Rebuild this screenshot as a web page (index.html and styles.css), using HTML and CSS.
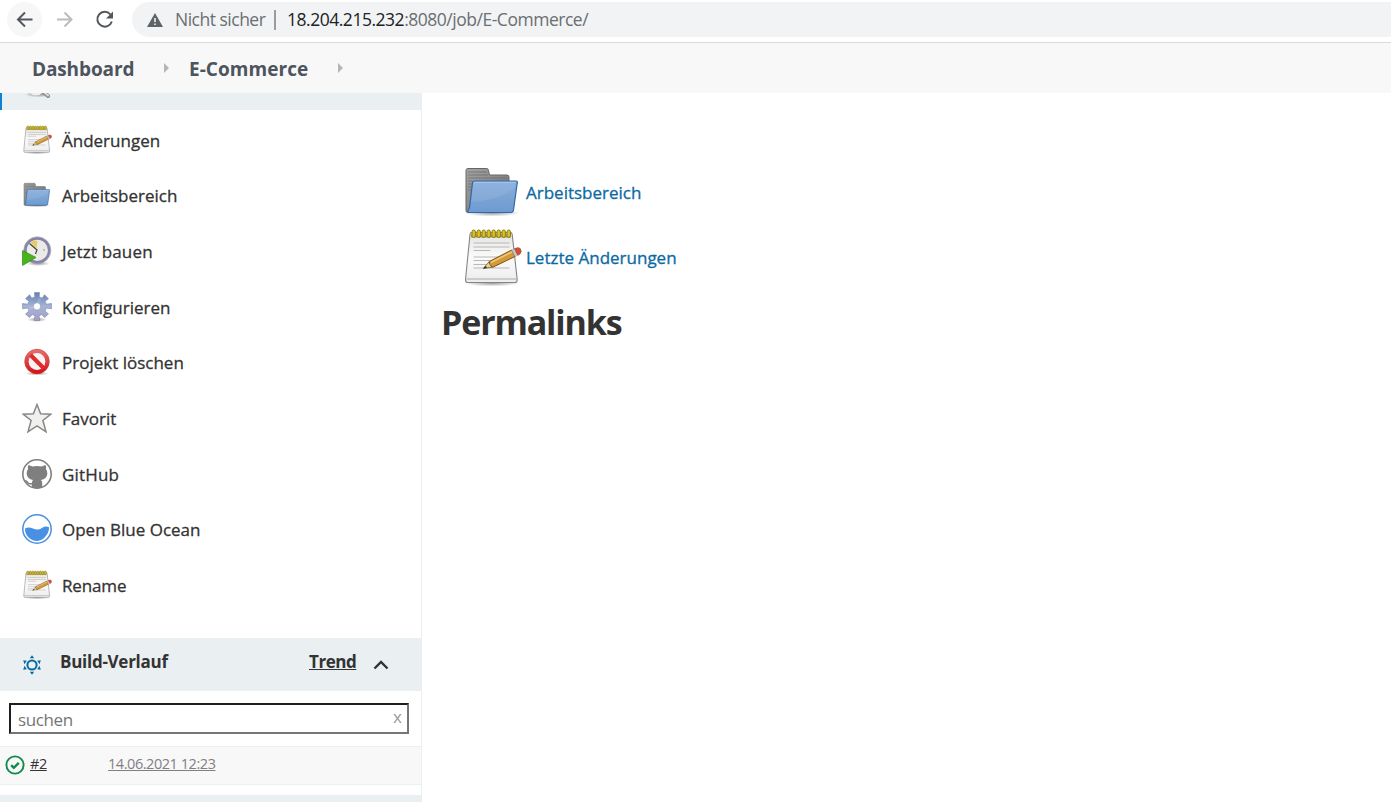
FILE: index.html
```html
<!DOCTYPE html>
<html lang="de">
<head>
<meta charset="utf-8">
<title>E-Commerce [Jenkins]</title>
<link rel="stylesheet" href="styles.css">
</head>
<body>
<svg class="defs" width="0" height="0" aria-hidden="true">
  <defs>
    <linearGradient id="paper" x1="0" y1="0" x2="0" y2="1"><stop offset="0" stop-color="#e2e2e0"/><stop offset=".5" stop-color="#fbfbfb"/><stop offset="1" stop-color="#ececec"/></linearGradient>
    <linearGradient id="blue" x1="0" y1="0" x2="0" y2="1"><stop offset="0" stop-color="#86aede"/><stop offset=".55" stop-color="#7ba3d3"/><stop offset="1" stop-color="#6c9bd2"/></linearGradient>
    <linearGradient id="grey" x1="0" y1="0" x2="1" y2="1"><stop offset="0" stop-color="#a5a5a5"/><stop offset="1" stop-color="#6c6c6c"/></linearGradient>
    <linearGradient id="gearfill" gradientUnits="userSpaceOnUse" x1="0" y1="0" x2="0" y2="29"><stop offset="0" stop-color="#5d7fb0"/><stop offset=".5" stop-color="#a8b4d3"/><stop offset="1" stop-color="#a19cc8"/></linearGradient>
    <linearGradient id="red" gradientUnits="userSpaceOnUse" x1="0" y1="2" x2="0" y2="27"><stop offset="0" stop-color="#e67474"/><stop offset="1" stop-color="#d40d12"/></linearGradient>
    <radialGradient id="shade"><stop offset="0" stop-color="#000" stop-opacity=".4"/><stop offset="1" stop-color="#000" stop-opacity="0"/></radialGradient>
    <symbol id="notepad" viewBox="0 0 60 60">
      <ellipse cx="30" cy="55" rx="28" ry="3.500" fill="url(#shade)"/>
      <path d="M9.500 4.500h39q1.500 0 1.700 2l5 45q0 3-2 3H5.500q-2 0-2-3L8 6.500q.2-2 1.500-2z" fill="url(#paper)" stroke="#858585" stroke-width="1.100"/>
      <path d="M4.500 51h50" stroke="#aaa"/>
      <path d="M11.500 15h36M11.500 19h36M11.500 22.500h17M11.500 29h36M11.500 32.500h30M11.500 36.500h24M11.500 40h36" stroke="#b8b8b8" stroke-width="1.100"/>
      <path d="M9 8h40" stroke="#a39b72" stroke-width="3"/>
      <g fill="#d9c32a" stroke="#8d7a08" stroke-width="1"><rect x="10" y="2" width="3.400" height="7.500" rx="1.700"/><rect x="15" y="2" width="3.400" height="7.500" rx="1.700"/><rect x="20" y="2" width="3.400" height="7.500" rx="1.700"/><rect x="25" y="2" width="3.400" height="7.500" rx="1.700"/><rect x="30" y="2" width="3.400" height="7.500" rx="1.700"/><rect x="35" y="2" width="3.400" height="7.500" rx="1.700"/><rect x="40" y="2" width="3.400" height="7.500" rx="1.700"/><rect x="45" y="2" width="3.400" height="7.500" rx="1.700"/></g>
      <path d="M21.300 40.500l6-7 4 5.500z" fill="#e8cf9b" stroke="#7b5a1d" stroke-width=".8"/>
      <path d="M27.300 33.500L49.700 22l3.300 6.500L31.300 39q-2.500.2-2.600-2-1.900-.5-1.400-3.500z" fill="#d29a37" stroke="#7e5115"/>
      <path d="M29 34.500L50 23.800" stroke="#efca7d" stroke-width="1.500"/>
      <path d="M49.700 22l2.800-1.300 3.300 6.500-2.800 1.300z" fill="#c9c9c9" stroke="#999" stroke-width=".5"/>
      <path d="M52.500 20.700q3.500-1.600 5.600-.3 2.200 3.200-.2 5.600l-2.100 1.200z" fill="#e0463d" stroke="#9c5a3a" stroke-width=".9"/>
      <path d="M21 40.800l2.500-3 1.600 2z" fill="#333"/>
    </symbol>
    <symbol id="folder" viewBox="0 0 60 60">
      <ellipse cx="30" cy="50" rx="28" ry="3.500" fill="url(#shade)"/>
      <path d="M4 7.500q0-2 2-2h18.500q2 0 2 2l1 4.500H45q2 0 2 2v35.500H6q-2 0-2-2z" fill="url(#grey)" stroke="#666"/>
      <path d="M6 9h19M6 12h20M6 15h39M6 18h4M6 21h4M6 24h4M6 27h4" stroke="#5f5f5f" stroke-width=".6"/>
      <path d="M12 18h42q1.500 0 1.300 1.500L51.500 47q-.4 2.500-2.500 2.500H7q-1.500 0-1-2 1.500-2 1.800-5l2.700-23q.2-1.500 1.500-1.500z" fill="url(#blue)" stroke="#3565a4" stroke-width="1.200"/>
      <path d="M12 19.300h42" stroke="#b3cdee" stroke-width=".8"/>
      <path d="M9 39q25-1 43-13l1-6H11.500z" fill="#fff" opacity=".08"/>
    </symbol>
  </defs>
</svg>

<header class="browser">
  <span class="nav-btn nav-btn-active"><svg width="20" height="20" viewBox="0 0 20 20"><path d="M17.500 9.500H3.500M10 2.500l-7 7 7 7" class="line dark"/></svg></span>
  <span class="nav-btn"><svg width="20" height="20" viewBox="0 0 20 20"><path d="M2 9.500h14M9.500 2.500l7 7-7 7" class="line pale"/></svg></span>
  <span class="nav-btn"><svg width="20" height="20" viewBox="0 0 20 20"><path d="M15.300 4.300A7.400 7.400 0 1 0 16.800 11.500" class="line dark"/><path d="M18 1.500v7h-7z" fill="#54575b"/></svg></span>
  <div class="address">
    <svg class="warn" width="16" height="14" viewBox="0 0 16 14"><path d="M8 0l8 14H0z" fill="#5f6368"/><path d="M7.200 5h1.600v4H7.200zM7.200 10.500h1.600V12H7.200z" fill="#f1f3f4"/></svg>
    <span class="insecure">Nicht sicher</span>
    <span class="sep"></span>
    <span class="url"><b>18.204.215.232</b>:8080/job/E-Commerce/</span>
  </div>
</header>

<nav class="crumbs">
  <a class="crumb crumb-dash">Dashboard</a><i class="tri"></i>
  <a class="crumb crumb-job">E-Commerce</a><i class="tri"></i>
</nav>

<div class="page">
  <aside class="side">
    <div class="current"><svg width="30" height="8" viewBox="0 0 30 8"><ellipse cx="14" cy="1.500" rx="13" ry="2.800" fill="url(#shade)"/><ellipse cx="12" cy="0" rx="5" ry="2.500" fill="#eee"/><path d="M20 0l4 3" stroke="#8c8c8c" stroke-width="4" stroke-linecap="round"/><path d="M21 0l3 2.500" stroke="#d8d8d8" stroke-width="2" stroke-linecap="round"/></svg></div>
    <ul class="tasks">
      <li><svg viewBox="0 0 60 60"><use href="#notepad"/></svg><span>Änderungen</span></li>
      <li><svg viewBox="0 -1 60 60"><use href="#folder" width="60" height="60"/></svg><span>Arbeitsbereich</span></li>
      <li><svg viewBox="0 0 30 30"><ellipse cx="16" cy="27.500" rx="12" ry="2.500" fill="url(#shade)"/><circle cx="15.300" cy="14.300" r="12" fill="#eaeae6" stroke="#8683aa" stroke-width="2.800"/><circle cx="15.300" cy="14.300" r="13.600" fill="none" stroke="#a9a9a9" stroke-width=".7"/><path d="M14.500 12.500L8.500 6.500Q12 3.500 15.500 5z" fill="#e8ca62"/><path d="M7.500 7.500l7.500 6.500-1.500 4" fill="none" stroke="#444" stroke-width="1.200"/><circle cx="22" cy="14" r=".7" fill="#777"/><path d="M.5 14.500L14 21.500.5 29.500z" fill="#47b51c" stroke="#35860f" stroke-width=".7"/></svg><span class="wider">Jetzt bauen</span></li>
      <li><svg viewBox="0 0 30 30"><ellipse cx="15" cy="27.500" rx="10" ry="2.500" fill="url(#shade)"/><path fill="url(#gearfill)" stroke="#7585b2" stroke-width=".6" fill-rule="evenodd" d="M12.500.5h5l-.3 4.500q1.800.4 3 1.200l2.300-3.500 4 4-3.500 2.500q.9 1.400 1.200 3l5.300-.7v5.200l-5.300-.7q-.3 1.600-1.200 3l3.500 3-4 3.500-2.800-3q-1.200.8-2.700 1.100l.8 4.900h-5.600l.8-4.900q-1.500-.3-2.700-1.100l-2.800 3-4-3.500 3.500-3q-.9-1.400-1.200-3l-5.300.7v-5.200l5.300.7q.3-1.600 1.200-3L3.500 6.700l4-4 2.300 3.500q1.200-.8 3-1.200zM15 10.700a3.700 3.700 0 1 0 0 7.400 3.700 3.700 0 1 0 0-7.400z"/><path d="M6 17q10-1 12-11" fill="none" stroke="#fff" stroke-width="3" opacity=".12"/></svg><span>Konfigurieren</span></li>
      <li><svg viewBox="0 0 30 30"><ellipse cx="15" cy="26.500" rx="12" ry="2" fill="url(#shade)"/><circle cx="15" cy="14.500" r="10.400" fill="#f7f3f3" stroke="url(#red)" stroke-width="4"/><path d="M8.500 8l13 13" stroke="#df2b2e" stroke-width="4"/><circle cx="15" cy="14.500" r="12.300" fill="none" stroke="#c9403f" stroke-width=".5"/></svg><span>Projekt löschen</span></li>
      <li><svg viewBox="0 0 30 30"><path d="M15 1.500l3.600 9.200 10.300.5-8 6.300 3.100 11.300L15 22.900 6 28.800l3.100-11.300-8-6.300 10.300-.5z" fill="#f0f0ef" stroke="#888" stroke-width="1.500"/></svg><span>Favorit</span></li>
      <li><svg viewBox="0 0 30 30"><circle cx="15" cy="15" r="14.200" fill="#fff" stroke="#7f7f7f" stroke-width="1.600"/><path d="M6.500 6l4 1.600q4.500-1 9 0l4-1.600q1 2 .4 4 1.600 2 1.400 5-.5 5-6.300 6 1.200 1 1.200 3v4.500q-5 2-10.400 0v-3q-4 .6-5.400-2.300-.7-1.500-2-2.200 2.500-.4 4.200 2.400 1 1 3.200.5.2-2 1.200-2.900-5.800-1-6.300-6-.2-3 1.400-5-.6-2 .4-4z" fill="#7f7f7f"/></svg><span class="wider">GitHub</span></li>
      <li><svg viewBox="0 0 30 30"><circle cx="15" cy="15" r="14.200" fill="#fff" stroke="#4a90e2" stroke-width="1.500"/><path d="M3 14.500q3.500-2 8 0 5 2.300 9-.6 3.500-2.300 7-.6 0 5-3 8.500A12 12 0 0 1 15 27 12 12 0 0 1 3 14.500z" fill="#4a90e2"/></svg><span>Open Blue Ocean</span></li>
      <li><svg viewBox="0 0 60 60"><use href="#notepad"/></svg><span class="tighter">Rename</span></li>
    </ul>

    <section class="builds">
      <div class="builds-head">
        <svg class="sun" width="20" height="20" viewBox="0 0 20 20"><circle cx="10" cy="10" r="4.600" fill="none" stroke="#0b6aa2" stroke-width="2"/><path d="M10 .3l2.200 2.900H7.800zM10 19.700l2.200-2.900H7.800zM1.200 5.200l3.600.5-2.300 3.600zM18.800 5.200l-3.600.5 2.300 3.600zM1.200 14.800l3.600-.5-2.300-3.600zM18.800 14.800l-3.600-.5 2.300-3.600z" fill="#0b6aa2"/></svg>
        <span class="builds-title">Build-Verlauf</span>
        <a class="trend">Trend</a>
        <svg class="chev" width="16" height="10" viewBox="0 0 16 10"><path d="M1.500 8.500L8 2l6.500 6.500" fill="none" stroke="#333" stroke-width="2.400"/></svg>
      </div>
      <div class="search"><span class="search-label">suchen</span><span class="search-x">x</span></div>
      <div class="build">
        <svg width="20" height="20" viewBox="0 0 20 20"><circle cx="10" cy="10" r="8.600" fill="none" stroke="#138a4b" stroke-width="1.900"/><path d="M6.200 10.200l2.600 2.600 5-5" fill="none" stroke="#138a4b" stroke-width="2.400"/></svg>
        <a class="build-no">#2</a><a class="build-date">14.06.2021 12:23</a>
      </div>
    </section>
    <div class="next"></div>
  </aside>

  <main class="main">
    <a class="link"><svg width="60" height="60" viewBox="0 0 60 60"><use href="#folder"/></svg><span>Arbeitsbereich</span></a>
    <a class="link"><svg width="60" height="60" viewBox="0 0 60 60"><use href="#notepad"/></svg><span>Letzte Änderungen</span></a>
    <h2 class="perma">Permalinks</h2>
  </main>
</div>
</body>
</html>
```

FILE: styles.css
```css
* { box-sizing: border-box; }
body { margin: 0; height: 802px; overflow: hidden; background: #fff; color: #333; font-family: "Open Sans", "Noto Sans", sans-serif; font-size: 17px; }
svg { display: block; flex: none; }
span, a { white-space: nowrap; }
.defs { position: absolute; }

.browser { display: flex; height: 43px; padding: 2px 0 5px 7px; border-bottom: 1px solid #dadada; }
.nav-btn { display: flex; align-items: center; justify-content: center; width: 35px; height: 35px; margin-right: 5px; border-radius: 50%; }
.nav-btn-active { background: #f7f7f7; }
.line { fill: none; stroke-width: 2; }
.dark { stroke: #54575b; }
.pale { stroke: #babcbe; }
.address { display: flex; flex: 1; align-items: center; margin-left: 5px; padding-left: 15px; border-radius: 18px 0 0 18px; background: #f1f3f4; color: #6b6e72; font-size: 17.500px; line-height: 35px; }
.insecure { width: 99px; margin-left: 12px; letter-spacing: -.5px; }
.sep { width: 2px; height: 20px; margin-right: 11px; background: #9a9da0; }
.url b { color: #202124; font-weight: 400; }
.url { letter-spacing: -.48px; }

.crumbs { display: flex; align-items: center; height: 50px; padding-left: 32px; background: #f8f8f8; color: #4d545d; font-size: 19px; font-weight: 700; }
.crumb { padding-top: 2px; line-height: 50px; }
.crumb-dash { width: 132px; letter-spacing: -.12px; }
.crumb-job { width: 149px; letter-spacing: .05px; }
.tri { border: 5px solid transparent; border-left-color: #b5b5b5; border-right: 0; margin-right: 20px; }

.page { display: flex; height: 709px; }
.side { width: 422px; border-right: 1px solid #eaeff2; }
.current { height: 17px; padding-left: 22px; border-left: 2px solid #0b83d0; background: #eaeff2; overflow: hidden; }
.tasks { height: 528px; margin: 0; padding: 2px 0 0 22px; list-style: none; }
.tasks li { display: flex; align-items: center; height: 55.65px; }
.tasks svg { width: 30px; height: 30px; margin-right: 10px; }
.tasks span { padding-top: 1px; -webkit-text-stroke: .3px #333; }
.tasks .wider { letter-spacing: .17px; }
.tasks .tighter { letter-spacing: -.15px; }

.builds-head { display: flex; align-items: center; height: 53px; padding-left: 22px; background: #eaeff2; font-weight: 700; line-height: 48px; }
.builds-title { width: 249px; margin-left: 18px; padding-bottom: 5px; letter-spacing: -.27px; }
.trend { width: 64px; padding-bottom: 5px; letter-spacing: -.45px; text-decoration: underline; }
.search { display: flex; justify-content: space-between; align-items: center; width: 400px; height: 31px; margin: 12px 0 12px 9px; padding: 0 5px 0 7px; border: 2px solid #1f1f1f; border-right-color: #767676; border-bottom-color: #767676; color: #757575; }
.search-label { padding-top: 1px; letter-spacing: -.4px; }
.search-x { padding-bottom: 4px; color: #999; font-size: 17px; }
.build { display: flex; align-items: center; height: 39px; padding: 0 0 2px 5px; border: 1px solid #eaeff2; border-width: 1px 0; background: #f8f8f8; font-size: 14.500px; letter-spacing: -.45px; }
.build-no { width: 78px; margin-left: 5px; }
.build a { padding-bottom: 2px; }
.build-no, .build-date { text-decoration: underline; }
.build-date { color: #808080; }
.next { height: 8px; margin-top: 10px; background: #eaeff2; }

.main { padding: 67px 0 0 20px; }
.link { display: flex; align-items: center; height: 65px; margin-left: 20px; color: #0b6aa2; }
.link span { margin-left: 4px; -webkit-text-stroke: .3px #0b6aa2; }
.perma { margin: 4px 0 0 -1px; font-size: 34px; line-height: 56px; font-weight: 700; letter-spacing: -1.15px; }
```
